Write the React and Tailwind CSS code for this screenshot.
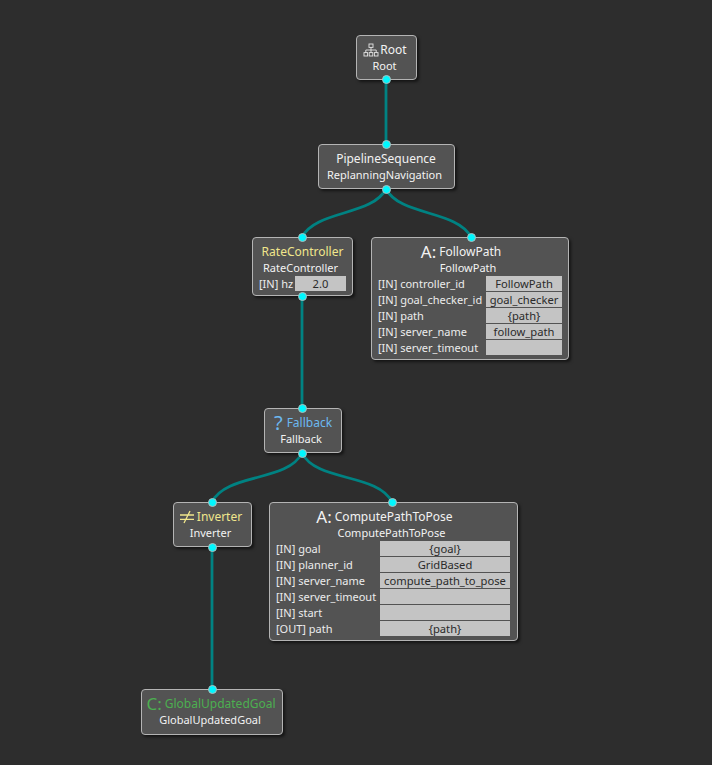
function Port({ className }) {
  return <span className={`absolute w-[9px] h-[9px] rounded-full bg-[#00f8ff] border border-[#aebcbc] ${className}`} />;
}

function Row({ label, value, inputClass }) {
  return (
    <div className="flex items-start h-[16px]">
      <span className="text-[11px] leading-[15px] text-[#ececec] whitespace-nowrap">{label}</span>
      <span className={`ml-auto h-[15px] bg-[#c4c4c4] text-[#2a2a2a] text-[11.2px] leading-[15px] text-center whitespace-nowrap ${inputClass}`}>{value}</span>
    </div>
  );
}

function Node({ className, children }) {
  return (
    <div className={`absolute rounded-[4px] border border-[#b4b4b4] bg-[#535353] shadow-[2px_2px_3px_rgba(0,0,0,0.55)] flex flex-col ${className}`}>
      {children}
    </div>
  );
}

function Title({ children, className = "" }) {
  return <div className={`flex items-center justify-center h-[16px] mt-[6px] text-[12px] leading-[16px] whitespace-nowrap ${className}`}>{children}</div>;
}

function Name({ children }) {
  return <div className="text-center h-[16px] pr-[4px] text-[11px] leading-[16px] text-[#f2f2f2] whitespace-nowrap">{children}</div>;
}

function Sitemap() {
  return (
    <svg width="16" height="14" viewBox="0 0 16 14" fill="none" stroke="#e6e6e6" strokeWidth="0.9" className="mr-[1px] -ml-[1px]">
      <rect x="6" y="1" width="4" height="3.4" />
      <rect x="1" y="9.6" width="3.6" height="3.4" />
      <rect x="6.2" y="9.6" width="3.6" height="3.4" />
      <rect x="11.4" y="9.6" width="3.6" height="3.4" />
      <path d="M8 4.4V9.6M2.8 9.6V7H13.2V9.6" />
    </svg>
  );
}

function NotEqual() {
  return (
    <svg width="16" height="14" viewBox="0 0 16 14" fill="none" stroke="#f0e68c" strokeWidth="1.3" className="mr-[2px]">
      <path d="M1 5H15M1 9.4H15M11 1L5 13" />
    </svg>
  );
}

export default function App() {
  return (
    <div className="relative w-[712px] h-[765px] overflow-hidden bg-[#2d2d2d] [font-family:'Noto_Sans',sans-serif]">
      <svg width="712" height="765" className="absolute left-0 top-0" fill="none" stroke="#008282" strokeWidth="2.8">
        <path d="M386 79V144" />
        <path d="M386 189C372 216 316 210 302 237" />
        <path d="M386 189C400 216 457 210 471 237" />
        <path d="M302 296V408" />
        <path d="M302 453C288 482 226 473 212 502" />
        <path d="M302 453C316 482 378 473 392 502" />
        <path d="M212 547V689" />
      </svg>

      <Node className="left-[356px] top-[35px] w-[61px] h-[45px]">
        <Title className="text-[#f2f2f2] pr-[2px]"><Sitemap />Root</Title>
        <Name>Root</Name>
      </Node>

      <Node className="left-[318px] top-[144px] w-[137px] h-[45px]">
        <Title className="text-[#f2f2f2] pr-[1px]">PipelineSequence</Title>
        <Name>ReplanningNavigation</Name>
      </Node>

      <Node className="left-[252px] top-[237px] w-[101px] h-[59px]">
        <Title className="text-[#f0e68c]">RateController</Title>
        <Name>RateController</Name>
        <div className="px-[6px]">
          <Row label="[IN] hz" value="2.0" inputClass="w-[51px]" />
        </div>
      </Node>

      <Node className="left-[371px] top-[237px] w-[198px] h-[123px]">
        <Title className="text-[#f2f2f2] pr-[18px]">
          <span className="text-[17px] mr-[3px]">A:</span>FollowPath
        </Title>
        <Name>FollowPath</Name>
        <div className="px-[6px]">
          <Row label="[IN] controller_id" value="FollowPath" inputClass="w-[76px]" />
          <Row label="[IN] goal_checker_id" value="goal_checker" inputClass="w-[76px]" />
          <Row label="[IN] path" value="{path}" inputClass="w-[76px]" />
          <Row label="[IN] server_name" value="follow_path" inputClass="w-[76px]" />
          <Row label="[IN] server_timeout" value="" inputClass="w-[76px]" />
        </div>
      </Node>

      <Node className="left-[264px] top-[408px] w-[78px] h-[45px]">
        <Title className="text-[#6cb8f0]">
          <span className="text-[20px] mr-[4px]">?</span>Fallback
        </Title>
        <Name>Fallback</Name>
      </Node>

      <Node className="left-[173px] top-[502px] w-[79px] h-[45px]">
        <Title className="text-[#f0e68c] pr-[4px]"><NotEqual />Inverter</Title>
        <Name>Inverter</Name>
      </Node>

      <Node className="left-[269px] top-[502px] w-[249px] h-[139px]">
        <Title className="text-[#f2f2f2] pr-[18px]">
          <span className="text-[17px] mr-[3px]">A:</span>ComputePathToPose
        </Title>
        <Name>ComputePathToPose</Name>
        <div className="pl-[6px] pr-[7px]">
          <Row label="[IN] goal" value="{goal}" inputClass="w-[130px]" />
          <Row label="[IN] planner_id" value="GridBased" inputClass="w-[130px]" />
          <Row label="[IN] server_name" value="compute_path_to_pose" inputClass="w-[130px]" />
          <Row label="[IN] server_timeout" value="" inputClass="w-[130px]" />
          <Row label="[IN] start" value="" inputClass="w-[130px]" />
          <Row label="[OUT] path" value="{path}" inputClass="w-[130px]" />
        </div>
      </Node>

      <Node className="left-[141px] top-[689px] w-[142px] h-[46px]">
        <Title className="text-[#4caf50] text-[11.6px] pr-[2px]">
          <span className="text-[17px] mr-[3px]">C:</span>GlobalUpdatedGoal
        </Title>
        <Name>GlobalUpdatedGoal</Name>
      </Node>

      <Port className="left-[382px] top-[75px]" />
      <Port className="left-[382px] top-[140px]" />
      <Port className="left-[382px] top-[185px]" />
      <Port className="left-[298px] top-[233px]" />
      <Port className="left-[467px] top-[233px]" />
      <Port className="left-[298px] top-[292px]" />
      <Port className="left-[298px] top-[404px]" />
      <Port className="left-[298px] top-[449px]" />
      <Port className="left-[208px] top-[498px]" />
      <Port className="left-[388px] top-[498px]" />
      <Port className="left-[208px] top-[543px]" />
      <Port className="left-[208px] top-[685px]" />
    </div>
  );
}
